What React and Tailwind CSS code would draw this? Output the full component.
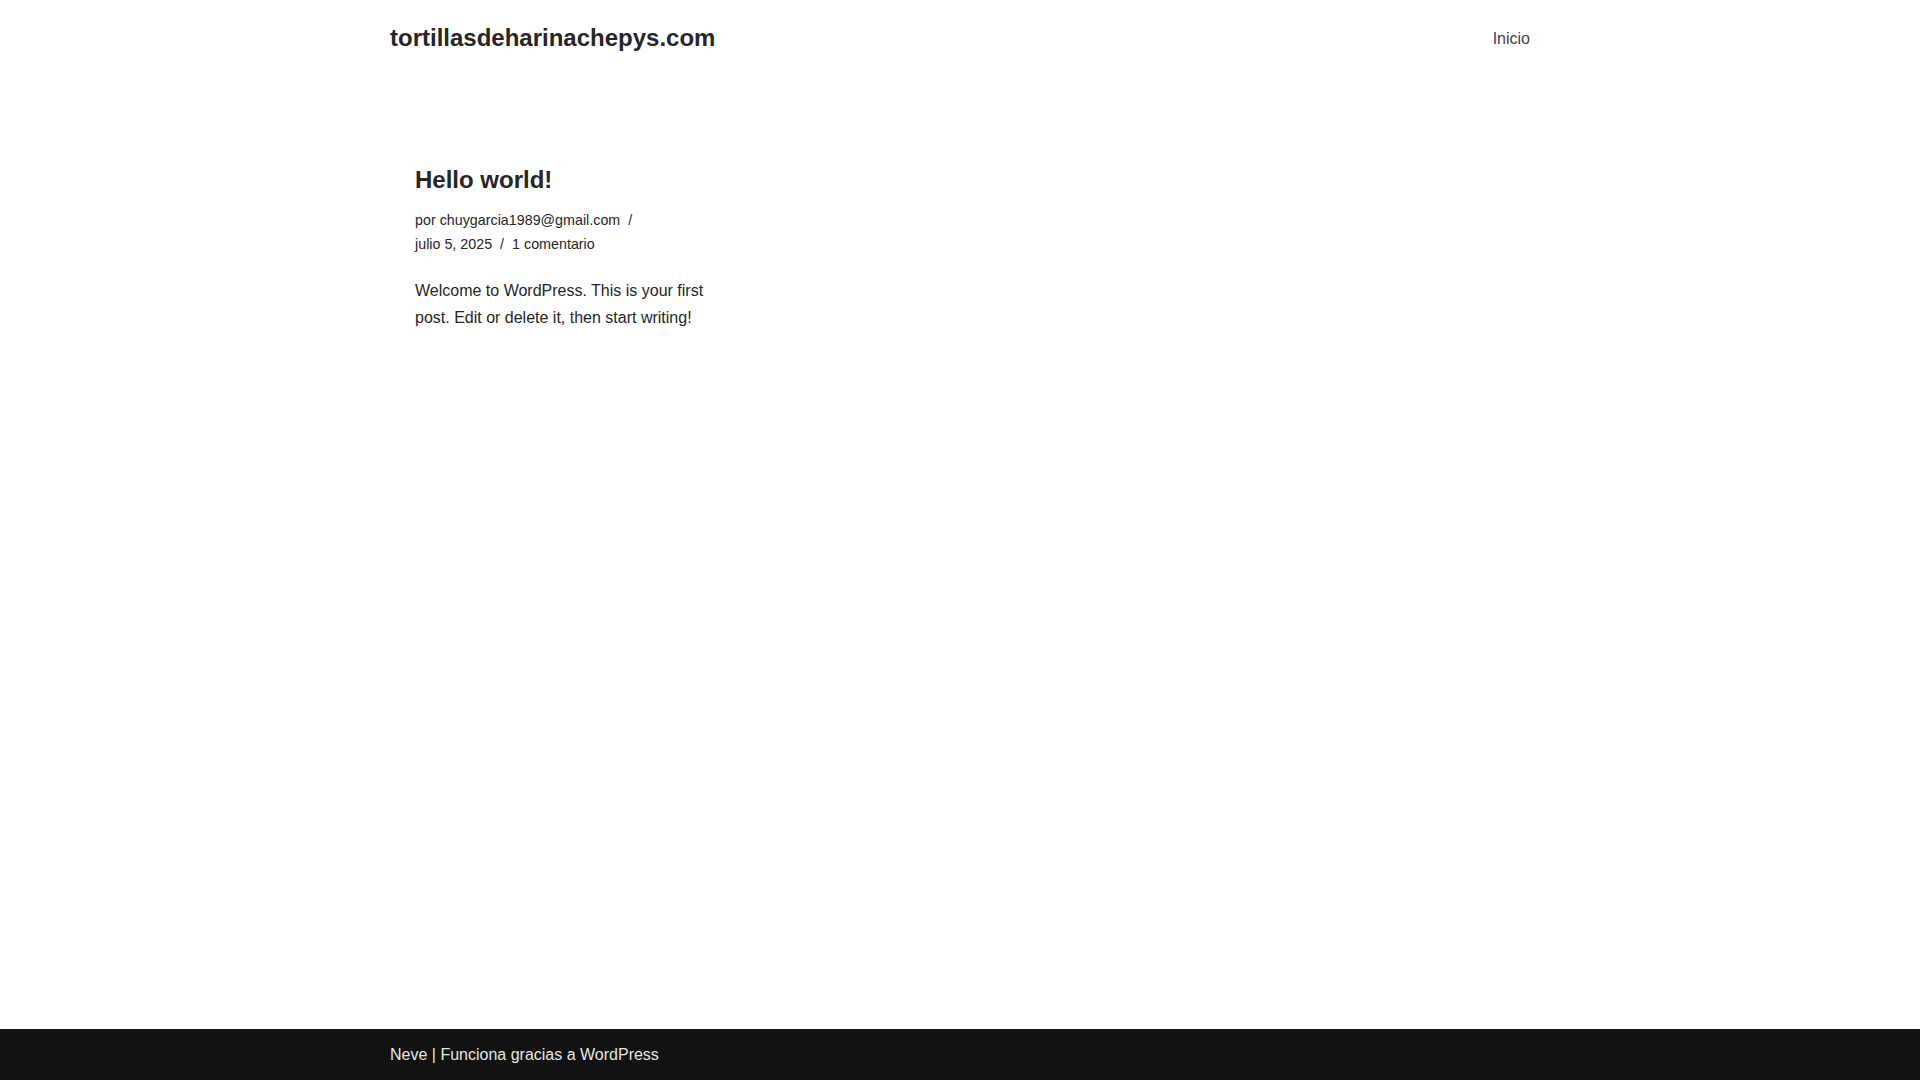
import React from 'react';

const FONT = { fontFamily: '"Liberation Sans", Arial, sans-serif' };

function Header() {
    return (
        <header className="w-full bg-white">
            <div className="mx-auto flex h-[76px] w-[1140px] items-center justify-between">
                <a className="text-[24px] font-bold leading-[1.2] text-[#272626]" href="#">
                    tortillasdeharinachepys.com
                </a>
                <nav className="pt-[2px]">
                    <a className="text-[16px] text-[#404248]" href="#">Inicio</a>
                </nav>
            </div>
        </header>
    );
}

function Post() {
    return (
        <article className="w-[305px] pl-[25px] box-content">
            <h2 className="text-[24px] font-bold leading-[1.2] text-[#272626]">Hello world!</h2>
            <ul className="mt-[13px] flex flex-wrap text-[14.3px] leading-[24.5px] text-[#272626]">
                <li className="whitespace-nowrap">por chuygarcia1989@gmail.com<span className="px-[8px]">/</span></li>
                <li className="whitespace-nowrap">julio 5, 2025<span className="px-[8px]">/</span></li>
                <li className="whitespace-nowrap">1 comentario</li>
            </ul>
            <p className="mt-[20px] text-[16px] leading-[27px] text-[#272626]">
                Welcome to WordPress. This is your first post. Edit or delete it, then start writing!
            </p>
        </article>
    );
}

export default function App() {
    return (
        <div className="flex min-h-[1080px] flex-col bg-white" style={FONT}>
            <Header />
            <main className="mx-auto w-[1140px] flex-1 pt-[90px]">
                <Post />
            </main>
            <footer className="h-[51px] bg-[#121212]">
                <div className="mx-auto flex h-full w-[1140px] items-center">
                    <p className="text-[16px] text-[#e6e6e6]">Neve | Funciona gracias a WordPress</p>
                </div>
            </footer>
        </div>
    );
}
